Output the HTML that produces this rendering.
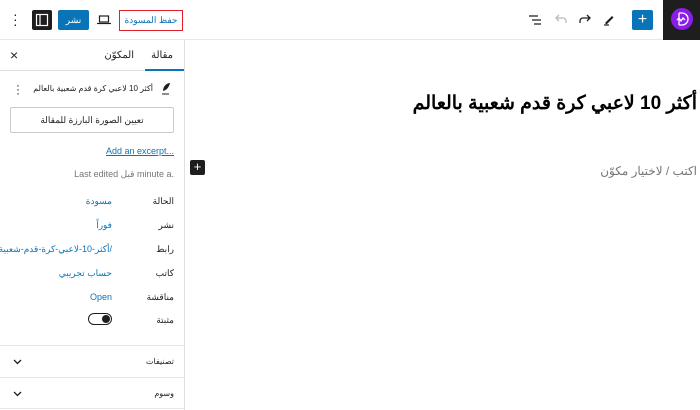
<!DOCTYPE html>
<html><head><meta charset="utf-8"><style>
*{margin:0;padding:0;box-sizing:border-box}
body{width:700px;height:410px;overflow:hidden;background:#fff;font-family:"Liberation Sans","Noto Sans CJK SC",sans-serif;position:relative;color:#1e1e1e}
.a{position:absolute}
.t{font-size:9px;white-space:nowrap}
.blue{color:#0a74b8}
.lbl{font-size:9px;color:#1e1e1e;white-space:nowrap}
.val{font-size:9px;color:#0a74b8;text-align:right;white-space:nowrap}
</style></head><body>
<div class="a" style="left:0;top:39px;width:700px;height:1px;background:#e8e8e8"></div>
<div class="a" style="left:663px;top:0;width:37px;height:40px;background:#1e1e1e"></div>
<div class="a" style="left:671px;top:8px;width:22px;height:22px;border-radius:50%;background:#8a1ee8"></div>
<svg class="a" style="left:671px;top:8px" width="22" height="22" viewBox="0 0 22 22" fill="none" stroke="#fff" stroke-width="1.3"><path d="M8 5v12M8 5h3a6 6 0 010 12h-3M6 12l2-2 2 3 2-3 2 2"/></svg>
<div class="a" style="left:632px;top:10px;width:21px;height:20px;background:#0a74b8;border-radius:2px;color:#fff;font-size:16px;line-height:19px;text-align:center">+</div>
<svg class="a" style="left:602px;top:13px" width="14" height="14" viewBox="0 0 14 14"><path d="M3 10l7-7 1.5 1.5-7 7z" fill="#1e1e1e"/><path d="M2 12h5" stroke="#1e1e1e" stroke-width="1.2"/></svg>
<svg class="a" style="left:578px;top:13px" width="14" height="14" viewBox="0 0 14 14" fill="none" stroke="#1e1e1e" stroke-width="1.3"><path d="M2 10V8a3 3 0 013-3h7M9 2l3 3-3 3"/></svg>
<svg class="a" style="left:554px;top:13px" width="14" height="14" viewBox="0 0 14 14" fill="none" stroke="#bbb" stroke-width="1.3"><path d="M12 10V8a3 3 0 00-3-3H2M5 2L2 5l3 3"/></svg>
<svg class="a" style="left:528px;top:13px" width="14" height="14" viewBox="0 0 14 14" stroke="#1e1e1e" stroke-width="1.3"><path d="M1 3h9M4 7h9M6 11h7"/></svg>
<div class="a" style="left:119px;top:10px;width:64px;height:21px;border:1.5px solid #e0202a;font-size:9px;color:#0a74b8;text-align:center;line-height:18px;direction:rtl">حفظ المسودة</div>
<svg class="a" style="left:97px;top:14px" width="14" height="12" viewBox="0 0 14 12" fill="none" stroke="#1e1e1e" stroke-width="1.2"><rect x="2.5" y="2" width="9" height="6"/><path d="M0 9.5h14"/></svg>
<div class="a" style="left:58px;top:10px;width:31px;height:20px;background:#0a74b8;border-radius:2px;color:#fff;font-size:9px;line-height:20px;text-align:center">نشر</div>
<div class="a" style="left:32px;top:10px;width:20px;height:20px;background:#1e1e1e;border-radius:2px"></div>
<svg class="a" style="left:35px;top:13px" width="14" height="14" viewBox="0 0 14 14" fill="none" stroke="#fff" stroke-width="1.2"><rect x="1.5" y="1.5" width="11" height="11"/><path d="M5 1.5v11"/></svg>
<div class="a" style="left:13px;top:12px;font-size:14px;line-height:5px;width:4px;text-align:center">·<br>·<br>·</div>
<!-- sidebar -->
<div class="a" style="left:184px;top:40px;width:1px;height:370px;background:#e0e0e0"></div>
<div class="a" style="left:0;top:70px;width:184px;height:1px;background:#e0e0e0"></div>
<div class="a" style="left:145px;top:69px;width:39px;height:2px;background:#0a74b8"></div>
<div class="a t" style="right:527px;top:50px;font-size:10px">مقالة</div>
<div class="a t" style="right:566px;top:50px;font-size:10px">المكوّن</div>
<div class="a" style="left:10px;top:47px;font-size:14px">×</div>
<svg class="a" style="left:160px;top:82px" width="12" height="13" viewBox="0 0 12 13"><path d="M3 9c0-5 4-8 7-8-1 4-3 7-7 8z" fill="#1e1e1e"/><path d="M2 12h7" stroke="#1e1e1e"/></svg>
<div class="a t" style="right:547px;top:84px;font-size:8px;letter-spacing:-0.2px;direction:rtl">أكثر 10 لاعبي كرة قدم شعبية بالعالم</div>
<div class="a" style="left:16px;top:83px;font-size:12px;line-height:4px">·<br>·<br>·</div>
<div class="a" style="left:10px;top:107px;width:164px;height:26px;border:1px solid #ccc;border-radius:2px;font-size:9px;line-height:24px;text-align:center;direction:rtl">تعيين الصورة البارزة للمقالة</div>
<div class="a t blue" style="right:526px;top:146px;text-decoration:underline">Add an excerpt...</div>
<div class="a t" style="right:526px;top:169px;color:#757575">Last edited قبل minute a.</div>
<div class="a lbl" style="right:526px;top:196px">الحالة</div><div class="a val" style="right:588px;top:196px">مسودة</div>
<div class="a lbl" style="right:526px;top:220px">نشر</div><div class="a val" style="right:588px;top:220px">فوراً</div>
<div class="a lbl" style="right:526px;top:244px">رابط</div><div class="a val" style="right:588px;top:244px;direction:rtl">/أكثر-10-لاعبي-كرة-قدم-شعبية</div>
<div class="a lbl" style="right:526px;top:268px">كاتب</div><div class="a val" style="right:588px;top:268px">حساب تجريبي</div>
<div class="a lbl" style="right:526px;top:292px">مناقشة</div><div class="a val" style="right:588px;top:292px">Open</div>
<div class="a lbl" style="right:526px;top:315px">مثبتة</div>
<div class="a" style="left:88px;top:313px;width:24px;height:12px;border:1px solid #1e1e1e;border-radius:6px"></div>
<div class="a" style="left:102px;top:315px;width:8px;height:8px;border-radius:50%;background:#1e1e1e"></div>
<div class="a" style="left:0;top:345px;width:184px;height:1px;background:#e8e8e8"></div>
<div class="a" style="left:0;top:377px;width:184px;height:1px;background:#e8e8e8"></div>
<div class="a" style="left:0;top:408px;width:184px;height:1px;background:#e8e8e8"></div>
<div class="a t" style="right:526px;top:357px;font-size:8px">تصنيفات</div>
<div class="a t" style="right:526px;top:389px;font-size:8px">وسوم</div>
<svg class="a" style="left:13px;top:359px" width="9" height="6" viewBox="0 0 9 6" fill="none" stroke="#1e1e1e" stroke-width="1.3"><path d="M1 1l3.5 3.5L8 1"/></svg>
<svg class="a" style="left:13px;top:391px" width="9" height="6" viewBox="0 0 9 6" fill="none" stroke="#1e1e1e" stroke-width="1.3"><path d="M1 1l3.5 3.5L8 1"/></svg>
<!-- content -->
<div class="a" style="right:3px;top:92px;font-size:19px;font-weight:bold;color:#000;direction:rtl;white-space:nowrap">أكثر 10 لاعبي كرة قدم شعبية بالعالم</div>
<div class="a" style="right:3px;top:164px;font-size:12px;color:#757575;direction:rtl;white-space:nowrap">اكتب / لاختيار مكوّن</div>
<div class="a" style="left:190px;top:160px;width:15px;height:15px;background:#1e1e1e;border-radius:2px;color:#fff;font-size:13px;line-height:14px;text-align:center">+</div>
</body></html>
